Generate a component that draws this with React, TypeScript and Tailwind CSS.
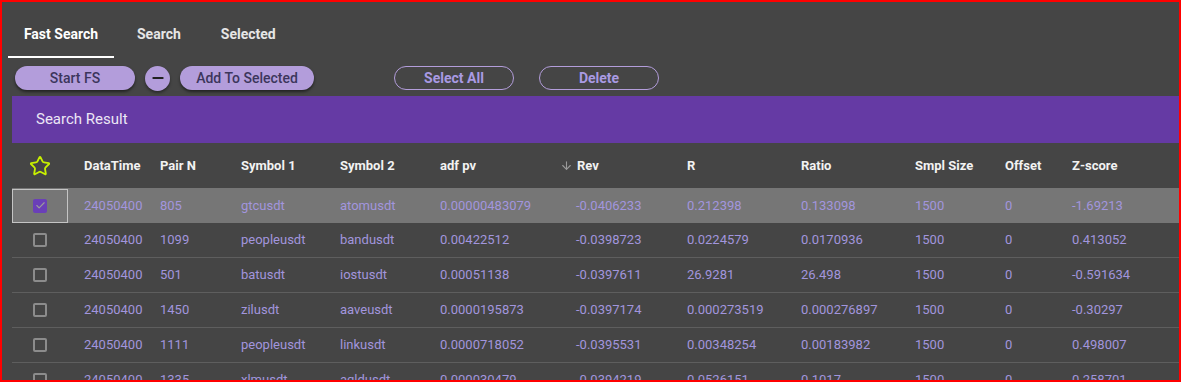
import React from "react";
import { ArrowDown, Star, Check, Minus } from "lucide-react";

const cols = "grid grid-cols-[56px_76px_81px_99px_100px_120px_127px_114px_114px_90px_67px_122px]";

const rows = [
  ["24050400", "805", "gtcusdt", "atomusdt", "0.00000483079", "-0.0406233", "0.212398", "0.133098", "1500", "0", "-1.69213"],
  ["24050400", "1099", "peopleusdt", "bandusdt", "0.00422512", "-0.0398723", "0.0224579", "0.0170936", "1500", "0", "0.413052"],
  ["24050400", "501", "batusdt", "iostusdt", "0.00051138", "-0.0397611", "26.9281", "26.498", "1500", "0", "-0.591634"],
  ["24050400", "1450", "zilusdt", "aaveusdt", "0.0000195873", "-0.0397174", "0.000273519", "0.000276897", "1500", "0", "-0.30297"],
  ["24050400", "1111", "peopleusdt", "linkusdt", "0.0000718052", "-0.0395531", "0.00348254", "0.00183982", "1500", "0", "0.498007"],
  ["24050400", "1335", "xlmusdt", "agldusdt", "0.000030479", "-0.0394219", "0.0526151", "0.1017", "1500", "0", "0.258701"],
];

const headers = ["DataTime", "Pair N", "Symbol 1", "Symbol 2", "adf pv", "Rev", "R", "Ratio", "Smpl Size", "Offset", "Z-score"];

export default function App() {
  return (
    <div className="w-[1181px] h-[382px] overflow-hidden border-2 border-[#ff0000] bg-[#454545] font-['Roboto',sans-serif]">
      {/* tabs */}
      <div className="flex pt-2 pl-[6px] h-[56px]">
        <div className="relative w-[106px] flex items-center justify-center text-[14px] font-bold text-white">
          Fast Search
          <div className="absolute bottom-0 left-0 right-0 h-[2px] bg-white" />
        </div>
        <div className="ml-[23px] flex items-center text-[14px] font-bold text-[#e6e6e6]">Search</div>
        <div className="ml-[40px] flex items-center text-[14px] font-bold text-[#e6e6e6]">Selected</div>
      </div>

      {/* actions */}
      <div className="flex items-center mt-2 pl-[13px] h-6">
        <button className="w-[120px] h-6 rounded-full bg-[#b39ddb] text-[14px] font-medium text-[#3c365c] shadow-[0_2px_3px_rgba(0,0,0,0.5)]">
          Start FS
        </button>
        <button className="ml-[10px] w-[25px] h-[25px] rounded-full bg-[#b39ddb] flex items-center justify-center text-[#222] shadow-[0_2px_3px_rgba(0,0,0,0.4)]">
          <Minus size={16} strokeWidth={3} />
        </button>
        <button className="ml-[10px] w-[134px] h-6 rounded-full bg-[#b39ddb] text-[14px] font-medium text-[#3c365c] shadow-[0_2px_3px_rgba(0,0,0,0.5)]">
          Add To Selected
        </button>
        <button className="ml-[80px] w-[120px] h-6 rounded-full border border-[#b39ddb] text-[14px] font-bold text-[#a99ae3]">
          Select All
        </button>
        <button className="ml-[25px] w-[120px] h-6 rounded-full border border-[#b39ddb] text-[14px] font-bold text-[#a99ae3]">
          Delete
        </button>
      </div>

      {/* table */}
      <div className="ml-[10px] mt-[6px]">
        <div className="h-[47px] bg-[#653aa4] flex items-center pl-6 text-[15px] text-[#ece6f5]">Search Result</div>

        <div className={`${cols} h-[45px] items-center text-[13px] font-bold text-[#f2f2f2]`}>
          <div className="flex justify-center">
            <Star size={22} strokeWidth={2} className="text-[#c8f000]" />
          </div>
          {headers.map((h) =>
            h === "Rev" ? (
              <div key={h} className="pl-4 flex items-center gap-[4px]">
                <ArrowDown size={13} className="text-[#9a9a9a]" />
                {h}
              </div>
            ) : (
              <div key={h} className="pl-4">
                {h}
              </div>
            )
          )}
        </div>

        {rows.map((r, i) => (
          <div
            key={i}
            className={`${cols} h-[35px] items-center text-[13px] text-[#a295dd] ${
              i === 0 ? "bg-[#767676]" : "border-b border-[#5e5e5e]"
            }`}
          >
            {i === 0 ? (
              <div className="h-[34px] border border-[#c4c4c4] flex items-center justify-center">
                <div className="w-[14px] h-[14px] rounded-[2px] bg-[#6a3fb8] flex items-center justify-center">
                  <Check size={11} strokeWidth={2.5} className="text-[#9c9c9c]" />
                </div>
              </div>
            ) : (
              <div className="flex items-center justify-center">
                <div className="w-[14px] h-[14px] rounded-[2px] border-2 border-[#8c8c8c]" />
              </div>
            )}
            {r.map((c, j) => (
              <div key={j} className={j === 5 ? "pl-8" : "pl-4"}>
                {c}
              </div>
            ))}
          </div>
        ))}
      </div>
    </div>
  );
}
